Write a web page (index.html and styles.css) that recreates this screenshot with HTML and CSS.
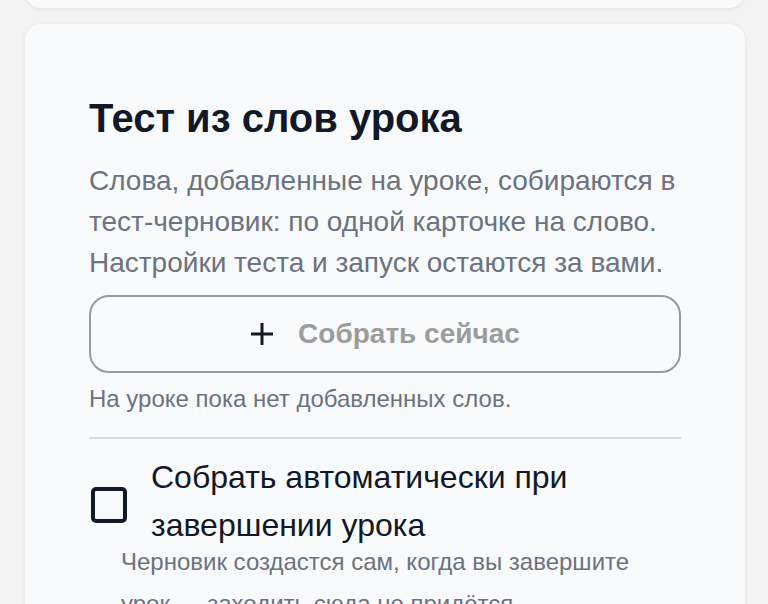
FILE: index.html
```html
<!DOCTYPE html>
<html lang="ru">
<head>
<meta charset="utf-8">
<title>Тест из слов урока</title>
<link rel="stylesheet" href="styles.css">
</head>
<body>
<div class="page">
  <div class="card card-prev"></div>
  <section class="card card-main">
    <h2 class="title">Тест из слов урока</h2>
    <p class="lead">Слова, добавленные на уроке, собираются в тест-черновик: по одной карточке на слово. Настройки теста и запуск остаются за вами.</p>
    <button class="btn" type="button" disabled>
      <svg class="btn-icon" viewBox="0 0 24 24" width="24" height="24" aria-hidden="true">
        <path d="M12 1v22M1 12h22" stroke="#111827" stroke-width="3" fill="none"/>
      </svg>
      <span class="btn-label">Собрать сейчас</span>
    </button>
    <p class="note">На уроке пока нет добавленных слов.</p>
    <hr class="divider">
    <label class="check-row">
      <span class="box"></span>
      <span class="check-label">Собрать автоматически при завершении урока</span>
    </label>
    <p class="hint">Черновик создастся сам, когда вы завершите урок — заходить сюда не придётся.</p>
  </section>
</div>
</body>
</html>
```

FILE: styles.css
```css
html, body {
  margin: 0;
  padding: 0;
  background: #f3f3f3;
  font-family: "Liberation Sans", Arial, sans-serif;
}

.page {
  width: 720px;
  padding-left: 25px;
  display: flex;
  flex-direction: column;
  gap: 16px;
}

.card {
  background: #f9fafb;
  border-radius: 16px;
  box-shadow: 0 1px 4px rgba(0, 0, 0, 0.08);
}

.card-prev {
  height: 108px;
  margin-top: -100px;
}

.card-main {
  padding: 72px 64px 40px;
}

.title {
  margin: 0;
  font-size: 40px;
  line-height: 45px;
  font-weight: 700;
  color: #111827;
}

.lead {
  margin: 19px 0 0;
  font-size: 28px;
  line-height: 41px;
  color: #6b7280;
}

.btn {
  margin-top: 12px;
  width: 100%;
  height: 78px;
  box-sizing: border-box;
  border: 2px solid #9a9a9a;
  border-radius: 20px;
  background: transparent;
  display: flex;
  align-items: center;
  justify-content: center;
  gap: 24px;
  font-family: inherit;
  padding: 0;
}

.btn-icon {
  display: block;
}

.btn-label {
  font-size: 28px;
  font-weight: 700;
  color: #9c9c9c;
}

.note {
  margin: 11px 0 0;
  font-size: 24px;
  line-height: 30px;
  color: #6b7280;
}

.divider {
  margin: 23px 0 0;
  border: 0;
  height: 2px;
  background: #dcdcdc;
}

.check-row {
  margin-top: 14px;
  display: flex;
  align-items: center;
  gap: 24px;
}

.box {
  flex: none;
  width: 36px;
  height: 36px;
  box-sizing: border-box;
  border: 4px solid #111827;
  border-radius: 5px;
  margin-left: 2px;
  margin-top: 7px;
}

.check-label {
  font-size: 32px;
  line-height: 48px;
  color: #111827;
}

.hint {
  margin: -8px 0 0 32px;
  font-size: 24px;
  line-height: 42px;
  color: #6b7280;
}
```
